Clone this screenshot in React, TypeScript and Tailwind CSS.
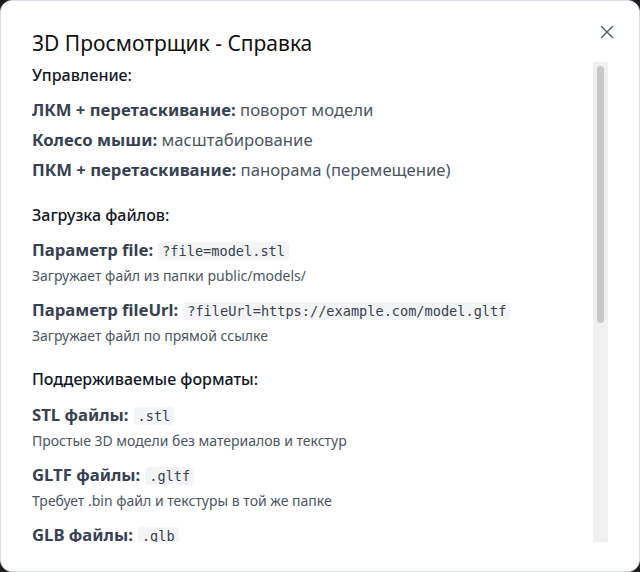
import React from "react";

const font = { fontFamily: '"Noto Sans", "Open Sans", sans-serif' };

function Code({ children }: { children: React.ReactNode }) {
    return (
        <code className="ml-[5px] rounded-[4px] bg-[#f3f4f6] px-[4px] py-[1px] font-['DejaVu_Sans_Mono',monospace] text-[13.6px] font-normal text-[#374151]">
            {children}
        </code>
    )
}

function Item({ label, text, code, desc }: { label: string, text?: string, code?: string, desc?: string }) {
    return (
        <div className="flex flex-col">
            <p className="text-[16.7px] leading-[24px] text-[#4b5563]">
                <span className="font-bold text-[#374151]">{label}</span>
                {text && <span> {text}</span>}
                {code && <Code>{code}</Code>}
            </p>
            {desc && <p className="mt-[3px] text-[14px] leading-[20px] text-[#4b5563]">{desc}</p>}
        </div>
    )
}

function HelpBody() {
    return (
        <div className="flex flex-col">
            <h3 className="text-[16px] leading-[24px] font-medium text-[#111827]">Управление:</h3>
            <div className="mt-[11px] flex flex-col gap-[6px]">
                <Item label="ЛКМ + перетаскивание:" text="поворот модели" />
                <Item label="Колесо мыши:" text="масштабирование" />
                <Item label="ПКМ + перетаскивание:" text="панорама (перемещение)" />
            </div>

            <h3 className="mt-[21px] text-[16px] leading-[24px] font-medium text-[#111827]">Загрузка файлов:</h3>
            <div className="mt-[11px] flex flex-col gap-[12px]">
                <Item label="Параметр file:" code="?file=model.stl" desc="Загружает файл из папки public/models/" />
                <Item label="Параметр fileUrl:" code="?fileUrl=https://example.com/model.gltf" desc="Загружает файл по прямой ссылке" />
            </div>

            <h3 className="mt-[21px] text-[16px] leading-[24px] font-medium text-[#111827]">Поддерживаемые форматы:</h3>
            <div className="mt-[12px] flex flex-col gap-[12px]">
                <Item label="STL файлы:" code=".stl" desc="Простые 3D модели без материалов и текстур" />
                <Item label="GLTF файлы:" code=".gltf" desc="Требует .bin файл и текстуры в той же папке" />
                <Item label="GLB файлы:" code=".glb" desc="Бинарный формат со всеми ресурсами" />
            </div>
        </div>
    )
}

export default function App() {
    return (
        <div className="h-[572px] w-[640px] bg-[#1e1e1e]" style={font}>
            <div className="relative flex h-full w-full flex-col rounded-[12px] border border-[#d6dee9] bg-white">
                <button className="absolute right-[24px] top-[23px] text-[#4b5563]" aria-label="Закрыть">
                    <svg width="16" height="16" viewBox="0 0 16 16" fill="none" stroke="currentColor" strokeWidth="1.3" strokeLinecap="round">
                        <path d="M2.5 2.5l11 11M13.5 2.5l-11 11" />
                    </svg>
                </button>
                <h2 className="pl-[31px] pt-[27px] text-[21px] leading-[30px] font-normal text-[#111]">3D Просмотрщик - Справка</h2>
                <div className="mt-[4px] flex h-[480px] pl-[31px] pr-[31px]">
                    <div className="flex-1 overflow-hidden pt-[1px]">
                        <HelpBody />
                    </div>
                    <div className="flex w-[15px] justify-center bg-[#f0f0f0] pt-[4px]">
                        <div className="h-[257px] w-[7px] rounded-full bg-[#c8c8c8]" />
                    </div>
                </div>
            </div>
        </div>
    )
}
